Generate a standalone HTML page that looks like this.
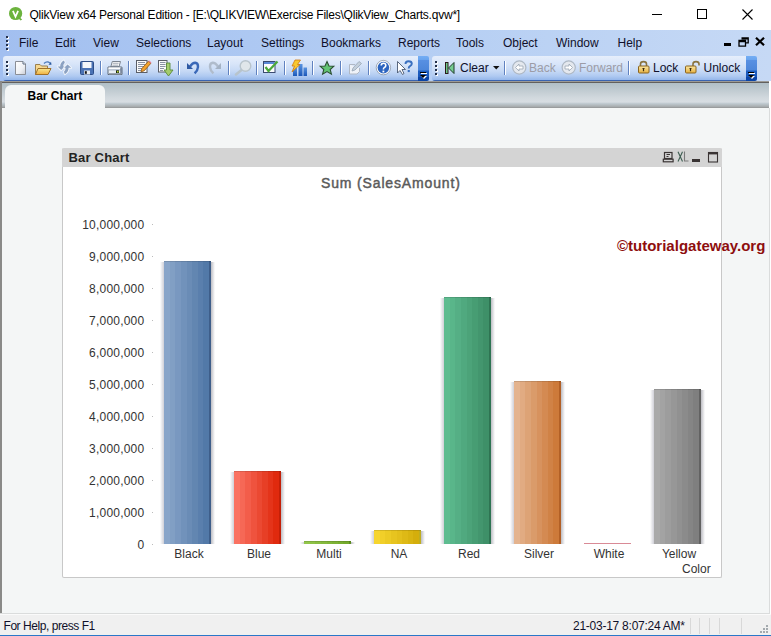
<!DOCTYPE html>
<html><head><meta charset="utf-8">
<style>
*{margin:0;padding:0;box-sizing:border-box}
html,body{width:771px;height:636px;overflow:hidden;background:#fff;font-family:"Liberation Sans",sans-serif;position:relative}
.a{position:absolute}
.t{position:absolute;white-space:nowrap;line-height:1}
#title{left:29.5px;top:8.6px;font-size:12px;color:#000;letter-spacing:-0.23px}
#menubar{left:0;top:30px;width:771px;height:51px;background:linear-gradient(90deg,#a2bff0 0%,#b3cdf3 50%,#c6d9f5 100%)}
.menu{font-size:12px;color:#10102a;top:36.8px}
.tb{top:56px;height:25px;border-radius:3px 0 0 3px;background:linear-gradient(180deg,#e6eefb 0px,#d8e5f9 8px,#c6d9f5 15px,#b0caf1 20px,#94b6ea 24px,#3a64b0 24px,#3a64b0 25px)}
.sep{position:absolute;top:61px;width:2px;height:14px;border-left:1px solid #6082c0;border-right:1px solid #fff}
.drop{top:56px;height:25px;background:linear-gradient(180deg,#6c9ee6 0%,#4f86d8 50%,#1f5cbc 80%,#0c47a6 100%);border-radius:0 3px 3px 0}
.grip{position:absolute;width:2px;height:2px;background:#24304a;box-shadow:1px 1px 0 #fff}
.tbt{font-size:12px;color:#10102a;top:62.3px}
.gray{color:#9c9ca6}
#sheet{left:0;top:81px;width:769px;height:532px;background:#f4f6f6}
#tabbar{left:0;top:83px;width:769px;height:25px;background:linear-gradient(180deg,#b0bfc7 0px,#c2ccd2 8px,#d2d9de 15px,#d7dde2 19px,#c0cad0 20.5px,#b4bcc0 22px,#a4a8aa 24px,#8e9090 25px)}
#tab{left:5px;top:85px;width:100px;height:23px;background:#f4f6f6;border-radius:6px 6px 0 0}
.ylab{font-size:12px;color:#333;text-align:right;width:82.3px;left:62px;letter-spacing:0.2px}
.xlab{font-size:12px;color:#333;text-align:center;width:70px;top:547.8px}
.tick{position:absolute;left:152px;width:1px;height:1px;background:#bbb}
.bar{position:absolute;border-top:1px solid rgba(0,0,0,0.12)}
.shl{position:absolute;width:4px;background:linear-gradient(90deg,rgba(70,70,100,0),rgba(70,70,100,0.26))}
.shr{position:absolute;width:4px;background:linear-gradient(90deg,rgba(50,50,70,0.32),rgba(50,50,70,0))}
</style></head><body>
<!-- title bar -->
<svg class="a" style="left:8px;top:6px" width="16" height="16" viewBox="0 0 16 16">
 <circle cx="7.6" cy="7.5" r="6.6" fill="#6cb33e"/>
 <path d="M11.5 11.2 L14.2 13.6 L12.6 14.6 L10.5 12.4Z" fill="#6cb33e"/>
 <path d="M4.9 4.9 L7.5 10.7 L10.1 4.9" fill="none" stroke="#fff" stroke-width="1.7"/>
</svg>
<div id="title" class="t">QlikView x64 Personal Edition - [E:\QLIKVIEW\Exercise Files\QlikView_Charts.qvw*]</div>
<div class="a" style="left:652px;top:14px;width:10px;height:1px;background:#000"></div>
<div class="a" style="left:697px;top:9px;width:10px;height:10px;border:1px solid #000"></div>
<svg class="a" style="left:742px;top:9px" width="11" height="11" viewBox="0 0 11 11"><path d="M0.5 0.5 L10.5 10.5 M10.5 0.5 L0.5 10.5" stroke="#000" stroke-width="1.1"/></svg>

<!-- menu bar -->
<div id="menubar" class="a"></div>
<div class="grip" style="left:6px;top:36px"></div>
<div class="grip" style="left:6px;top:40px"></div>
<div class="grip" style="left:6px;top:44px"></div>
<div class="grip" style="left:6px;top:48px"></div>
<div class="t menu" style="left:19px">File</div>
<div class="t menu" style="left:55px">Edit</div>
<div class="t menu" style="left:93px">View</div>
<div class="t menu" style="left:136px">Selections</div>
<div class="t menu" style="left:207px">Layout</div>
<div class="t menu" style="left:261px">Settings</div>
<div class="t menu" style="left:321px">Bookmarks</div>
<div class="t menu" style="left:398px">Reports</div>
<div class="t menu" style="left:456px">Tools</div>
<div class="t menu" style="left:503px">Object</div>
<div class="t menu" style="left:556px">Window</div>
<div class="t menu" style="left:617.5px">Help</div>
<!-- MDI buttons -->
<div class="a" style="left:724px;top:43px;width:7px;height:3px;background:#000"></div>
<svg class="a" style="left:738px;top:37px" width="11" height="10" viewBox="0 0 11 10"><path d="M3.5 0.8 H10.2 V5.8 H8 M1 3.5 H7.5 V9.2 H1 Z M1 4.5 H7.5 M3.5 1.8 H10.2" fill="none" stroke="#000" stroke-width="1.3"/></svg>
<svg class="a" style="left:755px;top:37px" width="10" height="9" viewBox="0 0 10 9"><path d="M1 0.8 L9 8.2 M9 0.8 L1 8.2" stroke="#000" stroke-width="2.2"/></svg>

<!-- toolbar 1 -->
<div class="a tb" style="left:3px;width:415px"></div>
<div class="grip" style="left:6px;top:61px"></div>
<div class="grip" style="left:6px;top:65px"></div>
<div class="grip" style="left:6px;top:69px"></div>
<div class="grip" style="left:6px;top:73px"></div>
<div class="sep" style="left:100px"></div>
<div class="sep" style="left:128px"></div>
<div class="sep" style="left:178px"></div>
<div class="sep" style="left:228px"></div>
<div class="sep" style="left:256px"></div>
<div class="sep" style="left:284px"></div>
<div class="sep" style="left:312px"></div>
<div class="sep" style="left:340px"></div>
<div class="sep" style="left:368px"></div>
<!-- toolbar 2 -->
<div class="a tb" style="left:432px;width:314px"></div>
<div class="grip" style="left:435px;top:61px"></div>
<div class="grip" style="left:435px;top:65px"></div>
<div class="grip" style="left:435px;top:69px"></div>
<div class="grip" style="left:435px;top:73px"></div>
<div class="t tbt" style="left:460px">Clear</div>
<div class="t tbt gray" style="left:529px">Back</div>
<div class="t tbt gray" style="left:579px">Forward</div>
<div class="t tbt" style="left:653px">Lock</div>
<div class="t tbt" style="left:703.5px">Unlock</div>
<div class="sep" style="left:504px"></div>
<div class="sep" style="left:628px"></div>

<svg class="a" style="left:0;top:0" width="771" height="82" viewBox="0 0 771 82">
<defs>
 <linearGradient id="gPage" x1="0" y1="0" x2="1" y2="1"><stop offset="0" stop-color="#ffffff"/><stop offset="0.6" stop-color="#eef0f4"/><stop offset="1" stop-color="#c8ccd4"/></linearGradient>
 <linearGradient id="gFold" x1="0" y1="0" x2="0" y2="1"><stop offset="0" stop-color="#f8e890"/><stop offset="1" stop-color="#f0b040"/></linearGradient>
 <linearGradient id="gGold" x1="0" y1="0" x2="0" y2="1"><stop offset="0" stop-color="#fbe7a0"/><stop offset="1" stop-color="#e6b040"/></linearGradient>
 <linearGradient id="gBlue" x1="0" y1="0" x2="0" y2="1"><stop offset="0" stop-color="#5a94e0"/><stop offset="1" stop-color="#1a56b8"/></linearGradient>
 <linearGradient id="gDrop" x1="0" y1="0" x2="0" y2="1"><stop offset="0" stop-color="#74aef4"/><stop offset="0.16" stop-color="#68a4ee"/><stop offset="0.16" stop-color="#5890e2"/><stop offset="0.56" stop-color="#4c86da"/><stop offset="0.6" stop-color="#1e5ec0"/><stop offset="0.84" stop-color="#1654b8"/><stop offset="0.84" stop-color="#0a44a6"/><stop offset="1" stop-color="#0a44a6"/></linearGradient>
</defs>
<!-- new doc -->
<path d="M15.5 61.5 H23 L25.5 64 V74.5 H15.5 Z" fill="url(#gPage)" stroke="#8a8e96" stroke-width="1"/>
<path d="M23 61.5 V64 H25.5" fill="#fff" stroke="#5a6a80" stroke-width="1"/>
<!-- open folder -->
<path d="M35.5 64.5 H40 L41.5 66 H47.5 V74.5 H35.5 Z" fill="#f6d890" stroke="#9a8050" stroke-width="1"/>
<path d="M38 68.5 H51 L48 74.5 H35.5 Z" fill="url(#gFold)" stroke="#a07028" stroke-width="1"/>
<path d="M44 63.5 Q47 60.5 50 63" fill="none" stroke="#4a78b8" stroke-width="1.3"/>
<path d="M48.5 64.8 L51.5 64.8 L51 61.8 Z" fill="#2a5aa0"/>
<!-- reload arrows (gray) -->
<g fill="#8ca2c2" stroke="#f2f6fb" stroke-width="1.8" stroke-linejoin="round" paint-order="stroke">
<path d="M57.6 66.4 H60.2 Q60.2 62.2 64 60.4 L64.8 62.8 Q63.2 63.8 63.2 66.4 H64.6 L61.2 70 Z"/>
<path d="M71.2 67.8 H68.6 Q68.6 72 64.8 74.2 L64 71.8 Q65.6 70.8 65.6 67.8 H64.2 L67.6 64.4 Z"/>
</g>
<!-- save -->
<rect x="80.5" y="61.5" width="13" height="13" rx="1" fill="#4a72b4" stroke="#2e4e88" stroke-width="1"/>
<rect x="82.5" y="62" width="9" height="6" fill="#f4f6fa"/>
<rect x="84" y="70.5" width="6" height="4" fill="#e8ecf2"/>
<rect x="84.8" y="71.2" width="2" height="2.6" fill="#111"/>
<!-- printer -->
<path d="M112.3 61.5 H120.5 L119 66.8 H110.8 Z" fill="#f6f6f6" stroke="#7c8490" stroke-width="1"/>
<path d="M113 63.3 H118.5 M112.4 65.2 H118" stroke="#a0a8b4" stroke-width="0.9"/>
<path d="M108 67 H121.5 Q122 67 122 67.5 V74.5 H108 Z" fill="#e8eef4" stroke="#5c6878" stroke-width="1"/>
<rect x="108.5" y="67.5" width="12.5" height="2" fill="#fdfdfd"/>
<rect x="108.5" y="69.5" width="12.5" height="0.8" fill="#8898b0"/>
<rect x="109" y="73" width="12.5" height="1.5" fill="#9aa4b0"/>
<rect x="116" y="70.3" width="3" height="2.7" fill="#1a2a10"/>
<rect x="117" y="71" width="1.5" height="1.5" fill="#b8d030"/>
<rect x="120.3" y="67.5" width="1.4" height="6" fill="#6a7890"/>
<!-- edit note -->
<rect x="136.5" y="60.5" width="10.5" height="12" fill="#fafafa" stroke="#5a5e68" stroke-width="1"/>
<path d="M138 62.5 H145 M138 64.5 H145 M138 66.5 H144 M138 68.5 H142 M138 70.5 H141" stroke="#8a92a2" stroke-width="1"/>
<path d="M141 71.8 L141.8 68.6 L148.4 61.2 L150.8 63.4 L144.2 70.8 Z" fill="#f2a22c" stroke="#8a5010" stroke-width="0.8"/>
<path d="M148.4 61.2 L150.8 63.4 L151.4 62.6 L149.4 60.6 Z" fill="#e87890"/>
<!-- import -->
<rect x="158.5" y="60.5" width="8.5" height="11.5" fill="#fafafa" stroke="#5a5e68" stroke-width="1"/>
<path d="M160 62.5 H165.5 M160 64.5 H165.5 M160 66.5 H165.5 M160 68.5 H164 M160 70.5 H163" stroke="#8a92a2" stroke-width="1"/>
<path d="M166.5 63 H170 V70 H173 L168.5 76 L164 70 H166.5 Z" fill="#a4cc6c" stroke="#5a8a3a" stroke-width="0.9"/>
<!-- undo -->
<path d="M190 66.5 Q192.5 62.8 195.2 62.8 Q198.2 63 198 67 Q197.8 70.5 194.6 73.4" fill="none" stroke="#3a68b8" stroke-width="2.4"/>
<path d="M187 63 V69 H193 Z" fill="#2e5aa4"/>
<!-- redo (gray) -->
<path d="M218 66.5 Q215.5 62.8 212.8 62.8 Q209.8 63 210 67 Q210.2 70.5 213.4 73.4" fill="none" stroke="#b0bccc" stroke-width="2.4"/>
<path d="M221 63 V69 H215 Z" fill="#a4b2c4"/>
<!-- magnifier gray -->
<path d="M241.5 70 L236 74.5" stroke="#b8c4cc" stroke-width="2.6" stroke-linecap="round"/>
<circle cx="245.5" cy="66" r="5.3" fill="#e0e6ea" stroke="#b8c4cc" stroke-width="1.4"/>
<!-- checkbox -->
<rect x="263.5" y="61.5" width="11.5" height="11" fill="#fbfbfd" stroke="#3a4a70" stroke-width="1"/>
<rect x="264" y="62" width="10.5" height="2" fill="#5a88d8"/>
<path d="M265.5 67 L268.5 71 L277.5 61.5" fill="none" stroke="#4aa83a" stroke-width="2.2"/>
<!-- chart wizard -->
<rect x="293" y="68" width="4" height="8" fill="url(#gBlue)"/>
<rect x="298.5" y="64" width="4" height="12" fill="url(#gBlue)"/>
<rect x="303.5" y="67.5" width="3.5" height="8.5" fill="url(#gBlue)"/>
<path d="M295 60 H300.5 L297.5 64.5 H300 L292 72 L294.5 66 H292 Z" fill="#f8c830" stroke="#d07810" stroke-width="0.8"/>
<!-- star -->
<path d="M327 61.5 L329 66 L333.8 66.3 L330.2 69.5 L331.4 74.2 L327 71.6 L322.6 74.2 L323.8 69.5 L320.2 66.3 L325 66 Z" fill="#62c474" stroke="#2c4e32" stroke-width="1.1"/>
<!-- edit gray -->
<path d="M349.5 64.5 H355 M349.5 64.5 V74 H357 L359.5 71.5 V68" fill="#eef2f8" stroke="#b0b8c4" stroke-width="1"/>
<path d="M352 71 L353 68 L359 61.5 L361.5 63.5 L355 70 Z" fill="#c4d0dc" stroke="#98a6b6" stroke-width="0.8"/>
<!-- help -->
<circle cx="383.4" cy="67.6" r="7.2" fill="#fff" stroke="#8c96a4" stroke-width="0.8"/>
<circle cx="383.4" cy="67.6" r="5.8" fill="#2c64c0"/>
<path d="M381.2 65.6 Q381.2 63.3 383.5 63.3 Q385.8 63.3 385.8 65.4 Q385.8 66.8 384.2 67.6 Q383.4 68 383.4 69.5" fill="none" stroke="#fff" stroke-width="1.6"/>
<rect x="382.5" y="70.6" width="1.8" height="1.8" fill="#fff"/>
<!-- what's this -->
<path d="M397.5 61.5 V73 L400 70.5 L402.5 74.5 L404 73.5 L402 69.5 L405.5 69.5 Z" fill="#fff" stroke="#4a5870" stroke-width="0.9"/>
<path d="M405.5 64 Q405.5 61.3 408.5 61.3 Q411.8 61.3 411.8 63.8 Q411.8 65.3 410 66.2 Q408.7 66.9 408.7 68.5" fill="none" stroke="#3a70c0" stroke-width="1.9"/>
<rect x="407.7" y="70" width="2.1" height="2.1" fill="#3a70c0"/>
<!-- dropdown 1 -->
<path d="M418 56 H427 Q429 56 429 58 V79 Q429 81 427 81 H418 Z" fill="url(#gDrop)"/>
<rect x="421" y="73" width="6" height="1" fill="#fff"/>
<rect x="420" y="72" width="6" height="1" fill="#000"/>
<path d="M421 76 H427 L424 79 Z" fill="#fff"/>
<path d="M420 75 H426 L423 78 Z" fill="#000"/>
<!-- clear -->
<rect x="445.5" y="62.5" width="2.5" height="11" fill="#6cc888" stroke="#2a1a1a" stroke-width="1"/>
<path d="M454 62.5 V73.5 L448.5 68 Z" fill="#74cc90" stroke="#1e3a2a" stroke-width="1"/>
<path d="M493 66 H499.5 L496.25 69.5 Z" fill="#111"/>
<!-- back -->
<circle cx="519.3" cy="67.5" r="6.6" fill="#e4e8ee" stroke="#aeb8c4" stroke-width="1.2"/>
<path d="M515.5 67.5 L519 64 V66 H523 V69 H519 V71 Z" fill="#fff" stroke="#9aa6b4" stroke-width="0.8"/>
<!-- forward -->
<circle cx="568.7" cy="67.5" r="6.6" fill="#e4e8ee" stroke="#aeb8c4" stroke-width="1.2"/>
<path d="M572.5 67.5 L569 64 V66 H565 V69 H569 V71 Z" fill="#fff" stroke="#9aa6b4" stroke-width="0.8"/>
<!-- lock -->
<path d="M640.5 66 V64 Q640.5 61.6 643.5 61.6 Q646.5 61.6 646.5 64 V66" fill="none" stroke="#8a7440" stroke-width="1.6"/>
<rect x="638.5" y="66" width="10.5" height="7" rx="1" fill="url(#gGold)" stroke="#8a6420" stroke-width="1"/>
<path d="M642.5 68.5 H644.5 M643.5 68.5 V71.2" stroke="#3a2a10" stroke-width="1.2"/>
<!-- unlock -->
<path d="M693 66 V64 Q693 61.6 696 61.6 Q699 61.6 699 64 V65.5" fill="none" stroke="#8a7440" stroke-width="1.6"/>
<rect x="685.5" y="66" width="10.5" height="7" rx="1" fill="url(#gGold)" stroke="#8a6420" stroke-width="1"/>
<path d="M689.5 68.5 H691.5 M690.5 68.5 V71.2" stroke="#3a2a10" stroke-width="1.2"/>
<!-- dropdown 2 -->
<path d="M746 56 H755 Q757 56 757 58 V79 Q757 81 755 81 H746 Z" fill="url(#gDrop)"/>
<rect x="749" y="73" width="6" height="1" fill="#fff"/>
<rect x="748" y="72" width="6" height="1" fill="#000"/>
<path d="M749 76 H755 L752 79 Z" fill="#fff"/>
<path d="M748 75 H754 L751 78 Z" fill="#000"/>
</svg>

<!-- sheet -->
<div id="sheet" class="a"></div>
<div id="tabbar" class="a"></div>
<div class="a" style="left:0;top:81px;width:769px;height:1px;background:#9c9a96"></div><div class="a" style="left:0;top:82px;width:769px;height:1px;background:#62605e"></div>
<div class="a" style="left:0;top:81px;width:2px;height:532px;background:#8a8a88"></div>
<div class="a" style="left:769px;top:108px;width:1px;height:506px;background:#dadcdc"></div>
<div class="a" style="left:0;top:613px;width:770px;height:1px;background:#dadcdc"></div>
<div id="tab" class="a"></div>
<div class="t" style="left:27.5px;top:90.2px;font-size:12px;font-weight:bold;color:#000">Bar Chart</div>

<!-- chart object -->
<div class="a" style="left:62px;top:148px;width:660px;height:430px;background:#fff;border:1px solid #c8c8c8;border-top:0;border-radius:2px"></div>
<div class="a" style="left:62px;top:148px;width:660px;height:19px;background:#d4d4d4;border-radius:2px 2px 0 0"></div>
<svg class="a" style="left:655px;top:145px" width="70" height="25" viewBox="0 0 70 25">
<rect x="9.5" y="7.5" width="7.5" height="6" fill="none" stroke="#3a3434" stroke-width="1.2"/>
<path d="M11.5 9.5 H15 M11.5 11.5 H13.5" stroke="#3a3434" stroke-width="1"/>
<rect x="8.3" y="14.2" width="9.8" height="2.6" fill="none" stroke="#3a3434" stroke-width="1.2"/>
<path d="M23 6.8 L27.5 16.5 M27.5 6.8 L23 16.5" stroke="#3e5e52" stroke-width="1.1"/>
<path d="M29.5 6.5 V16 H33.5" fill="none" stroke="#7a7a7a" stroke-width="1.1"/>
<rect x="37" y="14" width="8" height="3" fill="#3a3434"/>
<rect x="53.5" y="7.5" width="9" height="9.5" fill="none" stroke="#3a3434" stroke-width="1.1"/>
<rect x="53" y="7" width="10" height="2.4" fill="#3a3434"/>
</svg>
<div class="t" style="left:68.5px;top:150.8px;font-size:13px;font-weight:bold;color:#222;letter-spacing:0.2px">Bar Chart</div>
<div class="t" style="left:321px;top:175.9px;font-size:14px;color:#5a5a5a;letter-spacing:0.85px;-webkit-text-stroke:0.45px #5a5a5a">Sum (SalesAmount)</div>

<div class="t ylab" style="top:218.7px">10,000,000</div>
<div class="tick" style="top:224px"></div>
<div class="t ylab" style="top:250.7px">9,000,000</div>
<div class="tick" style="top:256px"></div>
<div class="t ylab" style="top:282.7px">8,000,000</div>
<div class="tick" style="top:288px"></div>
<div class="t ylab" style="top:314.7px">7,000,000</div>
<div class="tick" style="top:320px"></div>
<div class="t ylab" style="top:346.7px">6,000,000</div>
<div class="tick" style="top:352px"></div>
<div class="t ylab" style="top:378.7px">5,000,000</div>
<div class="tick" style="top:384px"></div>
<div class="t ylab" style="top:410.7px">4,000,000</div>
<div class="tick" style="top:416px"></div>
<div class="t ylab" style="top:442.7px">3,000,000</div>
<div class="tick" style="top:448px"></div>
<div class="t ylab" style="top:474.7px">2,000,000</div>
<div class="tick" style="top:480px"></div>
<div class="t ylab" style="top:506.7px">1,000,000</div>
<div class="tick" style="top:512px"></div>
<div class="t ylab" style="top:538.7px">0</div>
<div class="tick" style="top:544px"></div>
<div class="t xlab" style="left:154.0px">Black</div>
<div class="t xlab" style="left:224.0px">Blue</div>
<div class="t xlab" style="left:294.0px">Multi</div>
<div class="t xlab" style="left:364.0px">NA</div>
<div class="t xlab" style="left:434.0px">Red</div>
<div class="t xlab" style="left:504.0px">Silver</div>
<div class="t xlab" style="left:574.0px">White</div>
<div class="t xlab" style="left:644.0px">Yellow</div>
<div class="t" style="left:682px;top:562.6px;font-size:12px;color:#333">Color</div>
<div class="shl" style="left:160px;top:262px;height:282px"></div><div class="shr" style="left:211px;top:262px;height:282px"></div><div class="bar" style="left:164px;top:261px;width:47px;height:283px;background:linear-gradient(90deg,#89a5c9 0.0px,#89a5c9 5.6px,#819fc4 5.6px,#819fc4 11.2px,#7998c0 11.2px,#7998c0 16.9px,#7192bb 16.9px,#7192bb 22.5px,#6a8cb6 22.5px,#6a8cb6 28.1px,#6286b1 28.1px,#6286b1 33.8px,#5a7fad 33.8px,#5a7fad 39.4px,#5279a8 39.4px,#5279a8 45.0px,#3e5e8a 45px,#3e5e8a 47px)"></div>
<div class="shl" style="left:230px;top:472px;height:72px"></div><div class="shr" style="left:281px;top:472px;height:72px"></div><div class="bar" style="left:234px;top:471px;width:47px;height:73px;background:linear-gradient(90deg,#fa7262 0.0px,#fa7262 5.6px,#f66856 5.6px,#f66856 11.2px,#f35d4a 11.2px,#f35d4a 16.9px,#ef533e 16.9px,#ef533e 22.5px,#eb4932 22.5px,#eb4932 28.1px,#e73f26 28.1px,#e73f26 33.8px,#e4341a 33.8px,#e4341a 39.4px,#e02a0e 39.4px,#e02a0e 45.0px,#c42008 45px,#c42008 47px)"></div>
<div class="shl" style="left:300px;top:542px;height:2px"></div><div class="shr" style="left:351px;top:542px;height:2px"></div><div class="bar" style="left:304px;top:541px;width:47px;height:3px;background:linear-gradient(90deg,#92c64a 0.0px,#92c64a 5.6px,#8ec246 5.6px,#8ec246 11.2px,#89be41 11.2px,#89be41 16.9px,#85ba3d 16.9px,#85ba3d 22.5px,#81b639 22.5px,#81b639 28.1px,#7db235 28.1px,#7db235 33.8px,#78ae30 33.8px,#78ae30 39.4px,#74aa2c 39.4px,#74aa2c 45.0px,#5e9020 45px,#5e9020 47px)"></div>
<div class="shl" style="left:370px;top:531px;height:13px"></div><div class="shr" style="left:421px;top:531px;height:13px"></div><div class="bar" style="left:374px;top:530px;width:47px;height:14px;background:linear-gradient(90deg,#f6d52e 0.0px,#f6d52e 5.6px,#f1cf29 5.6px,#f1cf29 11.2px,#ecca24 11.2px,#ecca24 16.9px,#e7c41f 16.9px,#e7c41f 22.5px,#e3bf1b 22.5px,#e3bf1b 28.1px,#deb916 28.1px,#deb916 33.8px,#d9b411 33.8px,#d9b411 39.4px,#d4ae0c 39.4px,#d4ae0c 45.0px,#bfae20 45px,#bfae20 47px)"></div>
<div class="shl" style="left:440px;top:298px;height:246px"></div><div class="shr" style="left:491px;top:298px;height:246px"></div><div class="bar" style="left:444px;top:297px;width:47px;height:247px;background:linear-gradient(90deg,#5ebc90 0.0px,#5ebc90 5.6px,#59b68a 5.6px,#59b68a 11.2px,#55af85 11.2px,#55af85 16.9px,#50a97f 16.9px,#50a97f 22.5px,#4ca379 22.5px,#4ca379 28.1px,#479d73 28.1px,#479d73 33.8px,#43966e 33.8px,#43966e 39.4px,#3e9068 39.4px,#3e9068 45.0px,#2e7452 45px,#2e7452 47px)"></div>
<div class="shl" style="left:510px;top:382px;height:162px"></div><div class="shr" style="left:561px;top:382px;height:162px"></div><div class="bar" style="left:514px;top:381px;width:47px;height:163px;background:linear-gradient(90deg,#e4b38e 0.0px,#e4b38e 5.6px,#e1ab82 5.6px,#e1ab82 11.2px,#dda376 11.2px,#dda376 16.9px,#da9b6a 16.9px,#da9b6a 22.5px,#d7925e 22.5px,#d7925e 28.1px,#d48a52 28.1px,#d48a52 33.8px,#d08246 33.8px,#d08246 39.4px,#cd7a3a 39.4px,#cd7a3a 45.0px,#b26026 45px,#b26026 47px)"></div>
<div class="shl" style="left:650px;top:390px;height:154px"></div><div class="shr" style="left:701px;top:390px;height:154px"></div><div class="bar" style="left:654px;top:389px;width:47px;height:155px;background:linear-gradient(90deg,#a9a9a9 0.0px,#a9a9a9 5.6px,#a3a3a3 5.6px,#a3a3a3 11.2px,#9d9d9d 11.2px,#9d9d9d 16.9px,#979797 16.9px,#979797 22.5px,#919191 22.5px,#919191 28.1px,#8b8b8b 28.1px,#8b8b8b 33.8px,#858585 33.8px,#858585 39.4px,#7f7f7f 39.4px,#7f7f7f 45.0px,#626262 45px,#626262 47px)"></div>
<div class="a" style="left:584px;top:543px;width:47px;height:1px;background:#d98a96"></div>
<div class="t" style="left:617px;top:238.2px;font-size:15px;font-weight:bold;color:#8e0e0e">©tutorialgateway.org</div>
<div class="a" style="left:0;top:614px;width:771px;height:1px;background:#fafafa"></div>
<div class="a" style="left:0;top:615px;width:771px;height:20px;background:#f0f0f0"></div>
<div class="a" style="left:0;top:635px;width:771px;height:1px;background:#2a78c8"></div>
<div class="t" style="left:3.5px;top:619.5px;font-size:12px;color:#10102a;letter-spacing:-0.45px">For Help, press F1</div>
<div class="t" style="left:573px;top:619.5px;font-size:12px;color:#10102a;letter-spacing:-0.25px">21-03-17 8:07:24 AM*</div>
<div class="a" style="left:690px;top:618px;width:1px;height:16px;background:#d8d8d8"></div>
<div class="a" style="left:699px;top:618px;width:1px;height:16px;background:#d8d8d8"></div>
<div class="a" style="left:709px;top:618px;width:1px;height:16px;background:#d8d8d8"></div>
<div class="a" style="left:719px;top:618px;width:1px;height:16px;background:#d8d8d8"></div>
<div class="a" style="left:741px;top:618px;width:1px;height:16px;background:#d8d8d8"></div>
<div class="a" style="left:766px;top:625px;width:2px;height:2px;background:#a4aaae"></div>
<div class="a" style="left:763px;top:628px;width:2px;height:2px;background:#a4aaae"></div>
<div class="a" style="left:766px;top:628px;width:2px;height:2px;background:#a4aaae"></div>
<div class="a" style="left:760px;top:631px;width:2px;height:2px;background:#a4aaae"></div>
<div class="a" style="left:763px;top:631px;width:2px;height:2px;background:#a4aaae"></div>
<div class="a" style="left:766px;top:631px;width:2px;height:2px;background:#a4aaae"></div>
</body></html>
